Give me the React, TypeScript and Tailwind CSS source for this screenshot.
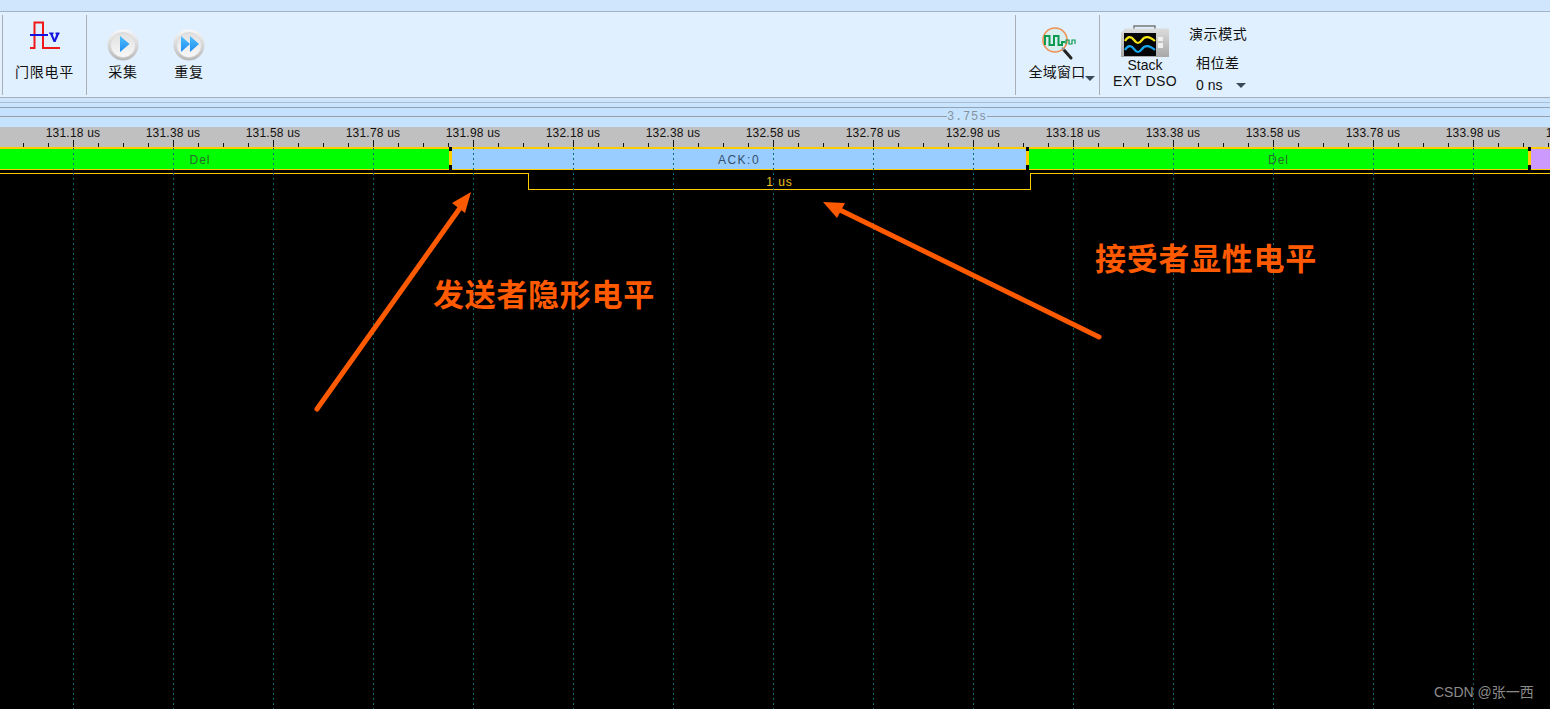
import React from "react";

const CJK = "font-['Liberation_Sans','Noto_Sans_CJK_SC',sans-serif]";

function ThresholdIcon() {
  return (
    <svg width="34" height="32" viewBox="0 0 34 32">
      <path d="M2 28H6.5V2.5H15V28H32" fill="none" stroke="#f01818" strokeWidth="2" />
      <rect x="2" y="14" width="18" height="2" fill="#1414e0" />
      <path d="M21 12.5h4.5v1.6l-.8.3 1.8 4.6 1.8-4.6-.8-.3v-1.6h4v1.6l-.7.3-3.3 7.6h-1.9l-3.3-7.6-.8-.3z" fill="#1414e0" />
    </svg>
  );
}

function RoundButton({ double, id }: { double?: boolean; id: string }) {
  return (
    <svg width="32" height="32" viewBox="0 0 32 32">
      <defs>
        <linearGradient id={id + "o"} x1="0" y1="0" x2="0" y2="1">
          <stop offset="0" stopColor="#f8f8f8" />
          <stop offset="1" stopColor="#b8b8b8" />
        </linearGradient>
        <linearGradient id={id + "i"} x1="0" y1="0" x2="0" y2="1">
          <stop offset="0" stopColor="#e0e0e0" />
          <stop offset="1" stopColor="#f8f8f8" />
        </linearGradient>
        <linearGradient id={id + "b"} x1="0" y1="0" x2="0" y2="1">
          <stop offset="0" stopColor="#4fc0ff" />
          <stop offset="1" stopColor="#1e8cf0" />
        </linearGradient>
      </defs>
      <circle cx="16" cy="16" r="15.5" fill={`url(#${id}o)`} />
      <circle cx="16" cy="16" r="12.5" fill={`url(#${id}i)`} stroke="#d0d0d0" strokeWidth="0.6" />
      {double ? (
        <path d="M8 7L17 15L8 23ZM17 7L26 15L17 23Z" fill={`url(#${id}b)`} />
      ) : (
        <path d="M13 7L22.5 15L13 23Z" fill={`url(#${id}b)`} />
      )}
    </svg>
  );
}

function MagnifierIcon() {
  return (
    <svg width="36" height="34" viewBox="0 0 36 34">
      <circle cx="14" cy="13" r="12" fill="#d8eef0" stroke="#ee9050" strokeWidth="1.6" />
      <path d="M4 18V9H8.5V18H13V9H17.5V18H21V15H24" fill="none" stroke="#0a9a50" strokeWidth="2" />
      <path d="M25 17V13H28V17H31V13H34V17" fill="none" stroke="#0a9a50" strokeWidth="1.2" />
      <path d="M23 23L30 31" stroke="#222" strokeWidth="3" strokeLinecap="round" />
      <path d="M21 20.5L23 23" stroke="#999" strokeWidth="2" />
    </svg>
  );
}

function ScopeIcon() {
  return (
    <svg width="50" height="34" viewBox="0 0 50 34">
      <defs>
        <linearGradient id="scopeBody" x1="0" y1="0" x2="0" y2="1">
          <stop offset="0" stopColor="#dcdcdc" />
          <stop offset="1" stopColor="#a8a8a8" />
        </linearGradient>
      </defs>
      <path d="M14 4V1H35V4" fill="none" stroke="#777" strokeWidth="1.4" />
      <path d="M5 3.5H49V32H1V8Z" fill="url(#scopeBody)" />
      <rect x="4" y="8" width="32" height="23" fill="#050505" />
      <path d="M5 16C8 11 11 11 14 15S19 19 22 15S29 11 35 16" fill="none" stroke="#f8e818" strokeWidth="2.2" />
      <path d="M5 25C8 20 11 20 14 24S19 28 22 24S29 20 35 25" fill="none" stroke="#18a8f0" strokeWidth="2.2" />
      <rect x="38" y="12" width="5" height="4" fill="#f0f0f0" />
      <rect x="38" y="18" width="5" height="5" fill="#f0f0f0" />
    </svg>
  );
}

function Caret() {
  return <span className="block h-0 w-0 border-x-[5px] border-t-[5px] border-x-transparent border-t-[#3c4a58]" />;
}

function Separator() {
  return <div className="mt-[3px] mb-[2px] w-px shrink-0 bg-[#a9afb5]" />;
}

function ToolItem({ width, icon, label, iconTop }: { width: string; icon: React.ReactNode; label: string; iconTop: string }) {
  return (
    <div className={`flex flex-col items-center ${width}`}>
      <div className={`flex h-[52px] justify-center ${iconTop}`}>{icon}</div>
      <span className="text-[14px] leading-[16px] tracking-[0.7px] text-[#111]">{label}</span>
    </div>
  );
}

function Notch() {
  return (
    <div className="flex w-[3px] shrink-0 flex-col bg-black">
      <div className="h-[4px]" />
      <div className="flex-1 bg-[#ffcc00]" />
      <div className="h-[5px]" />
    </div>
  );
}

function Bar({ className, label, text }: { className: string; label: string; text: string }) {
  return (
    <div className={`flex items-center justify-center border-t-2 border-b border-[#ffcc00] pt-[1px] text-[12px] leading-[14px] ${className}`}>
      <span className={text}>{label}</span>
    </div>
  );
}

const majors = Array.from({ length: 16 }, (_, i) => 73 + i * 100);
const minors = Array.from({ length: 62 }, (_, i) => 23 + i * 25).filter((x) => (x - 73) % 100 !== 0);
const labels = majors.map((_, i) => (131.18 + i * 0.2).toFixed(2) + " us");

export default function App() {
  return (
    <div className={`relative flex h-[709px] w-[1550px] flex-col overflow-hidden bg-black ${CJK}`}>
      {/* top strip */}
      <div className="h-[12px] shrink-0 border-b border-[#9fb2c6] bg-[#cfe6fd]" />

      {/* toolbar */}
      <div className="flex h-[86px] shrink-0 border-b border-[#a3afbb] bg-[#e1f0fe]">
        <div className="w-[2px] shrink-0" />
        <Separator />
        <ToolItem width="w-[83px]" iconTop="pt-[8px]" icon={<ThresholdIcon />} label="门限电平" />
        <Separator />
        <div className="w-[3px] shrink-0" />
        <ToolItem width="w-[66px]" iconTop="pt-[17px]" icon={<RoundButton id="play" />} label="采集" />
        <ToolItem width="w-[66px]" iconTop="pt-[17px]" icon={<RoundButton id="rep" double />} label="重复" />
        <div className="flex-1" />

        <Separator />
        <div className="relative w-[83px] shrink-0">
          <div className="flex flex-col items-center">
            <div className="flex h-[52px] justify-center pt-[15px] pl-[2px]">
              <MagnifierIcon />
            </div>
            <span className="-ml-[1px] text-[14px] leading-[16px] tracking-[0.3px] text-[#111]">全域窗口</span>
          </div>
          <div className="absolute top-[64px] left-[69px]">
            <Caret />
          </div>
        </div>
        <Separator />

        <div className="flex w-[80px] shrink-0 flex-col items-center pt-[13px] pl-[10px]">
          <ScopeIcon />
          <span className="mt-[-2px] text-[14px] leading-[16px] text-[#111]">Stack</span>
          <span className="text-[14px] leading-[16px] tracking-[0.4px] whitespace-nowrap text-[#111]">EXT DSO</span>
        </div>
        <div className="ml-[9px] flex w-[62px] shrink-0 flex-col">
          <span className="mt-[14px] text-[14px] leading-[16px] tracking-[0.6px] whitespace-nowrap text-[#111]">演示模式</span>
          <span className="mt-[13px] pl-[7px] text-[14px] leading-[16px] tracking-[0.5px] whitespace-nowrap text-[#111]">相位差</span>
          <div className="mt-[6px] flex items-center pl-[7px]">
            <span className="w-[40px] text-[14px] leading-[16px] whitespace-nowrap text-[#111]">0 ns</span>
            <Caret />
          </div>
        </div>
        <div className="w-[299px] shrink-0" />
      </div>

      {/* rails */}
      <div className="h-[5px] shrink-0 border-b border-[#a9c0d4] bg-[#cde5fc]" />
      <div className="h-[5px] shrink-0 border-b border-[#93a3b2] bg-[#c9e4fe]" />
      <div className="flex h-[19px] shrink-0 items-center bg-[#c5e3ff] pb-[2px]">
        <div className="h-px w-[947px] bg-[#9a9fa6]" />
        <span className="w-[40px] text-center font-['Liberation_Mono',monospace] text-[12px] leading-[12px] tracking-[0.8px] text-[#86929e]">3.75s</span>
        <div className="h-px flex-1 bg-[#9a9fa6]" />
      </div>

      {/* ruler */}
      <div className="relative h-[20px] shrink-0 bg-[#c0c0c0]">
        <div className="flex pl-[23px]">
          {labels.map((l) => (
            <span key={l} className="w-[100px] shrink-0 text-center text-[12px] leading-[13px] tracking-[0.2px] whitespace-nowrap text-[#111]">
              {l}
            </span>
          ))}
        </div>
        <svg className="absolute top-0 left-0" width="1550" height="20">
          {minors.map((x) => (
            <rect key={x} x={x} y="16" width="1" height="4" fill="#111" />
          ))}
          {majors.map((x) => (
            <rect key={x} x={x} y="13" width="1" height="7" fill="#111" />
          ))}
        </svg>
      </div>

      {/* decoded row */}
      <div className="flex h-[23px] shrink-0">
        <Bar className="w-[449px] shrink-0 bg-[#00ff00] pr-[49px]" label="Del" text="tracking-[1px] text-[#2a6a2a]" />
        <Notch />
        <Bar className="w-[574px] shrink-0 bg-[#99ccff]" label="ACK:0" text="tracking-[1.5px] text-[#34506c]" />
        <Notch />
        <Bar className="w-[499px] shrink-0 bg-[#00ff00]" label="Del" text="tracking-[1px] text-[#2a6a2a]" />
        <Notch />
        <Bar className="flex-1 bg-[#cc99ff]" label="" text="" />
      </div>

      {/* measurement row */}
      <div className="mt-[3px] flex h-[17px] shrink-0">
        <div className="w-[528px] shrink-0 border-t border-[#ffcc00]" />
        <div className="flex w-[503px] shrink-0 items-center justify-center border-x border-b border-[#ffcc00] pt-[2px] text-[12px] leading-[14px] tracking-[1px] text-[#f0c020]">
          1 us
        </div>
        <div className="flex-1 border-t border-[#ffcc00]" />
      </div>
      <div className="flex-1" />

      {/* grid lines */}
      <svg className="pointer-events-none absolute top-[148px] left-0" width="1550" height="561">
        {majors.map((x) => (
          <line key={x} x1={x + 0.5} y1="0" x2={x + 0.5} y2="561" stroke="#0b6a70" strokeWidth="1" strokeDasharray="2 3" />
        ))}
      </svg>

      {/* annotation arrows */}
      <svg className="pointer-events-none absolute top-0 left-0" width="1550" height="709">
        <line x1="317" y1="409" x2="460" y2="208" stroke="#ff5a00" strokeWidth="5" strokeLinecap="round" />
        <path d="M471 192L452 203L465 213Z" fill="#ff5a00" />
        <line x1="1099" y1="337" x2="838" y2="209" stroke="#ff5a00" strokeWidth="5" strokeLinecap="round" />
        <path d="M823 202L845 203L837 218Z" fill="#ff5a00" />
      </svg>

      <span className="absolute top-[276px] left-[433px] text-[31px] leading-[40px] font-bold tracking-[0.7px] whitespace-nowrap text-[#ff5a00]">发送者隐形电平</span>
      <span className="absolute top-[240px] left-[1095px] text-[31px] leading-[40px] font-bold tracking-[0.7px] whitespace-nowrap text-[#ff5a00]">接受者显性电平</span>
      <span className="absolute top-[684px] left-[1434px] text-[14px] leading-[16px] whitespace-nowrap text-[#8c8c8c]">CSDN @张一西</span>
    </div>
  );
}
